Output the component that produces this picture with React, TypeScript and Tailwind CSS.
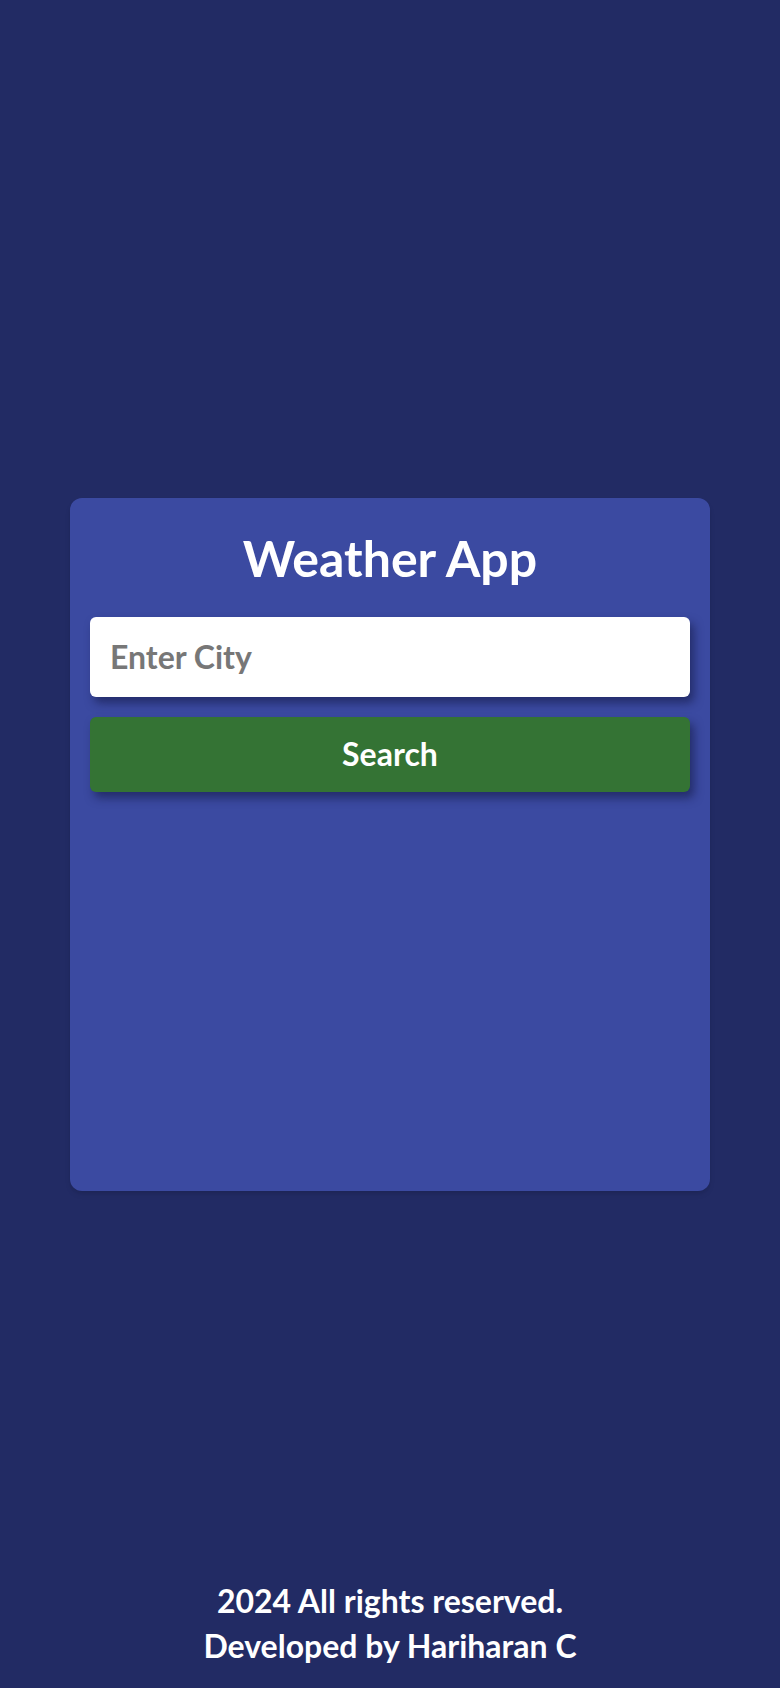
import { useState } from "react";

export default function App() {
  const [city, setCity] = useState("");

  return (
    <div
      className="min-h-screen flex flex-col bg-[#222b64] text-white"
      style={{ fontFamily: "Lato, 'Open Sans', sans-serif" }}
    >
      {/* spacer mirrors footer so the card sits in the middle of the screen */}
      <div className="h-[120px]" />

      <main className="flex-1 flex items-center justify-center px-[70px]">
        <div className="w-[640px] h-[693px] bg-[#3b4aa1] rounded-xl shadow-md px-5 pt-[30px]">
          <h1 className="text-center text-[50px] font-bold leading-[60px] mb-[29px]">
            Weather App
          </h1>
          <input
            value={city}
            onChange={(e) => setCity(e.target.value)}
            placeholder="Enter City"
            className="w-full h-20 bg-white rounded-md px-5 text-[32px] font-bold text-gray-700 placeholder:text-[#777777] outline-none shadow-[4px_6px_10px_rgba(20,25,70,0.6)]"
          />
          <button className="mt-5 w-full h-[75px] bg-[#347334] rounded-md text-[32px] font-bold text-white shadow-[4px_6px_10px_rgba(20,25,70,0.6)]">
            Search
          </button>
        </div>
      </main>

      <footer className="h-[120px] flex flex-col items-center justify-end pb-[20px] text-[32px] font-bold leading-[45px]">
        <p>2024 All rights reserved.</p>
        <p>Developed by Hariharan C</p>
      </footer>
    </div>
  );
}
